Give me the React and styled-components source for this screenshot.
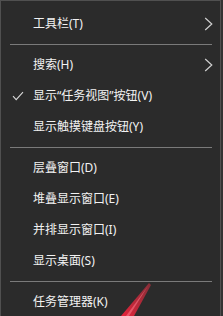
import React from "react";
import styled, { createGlobalStyle } from "styled-components";

const GlobalStyle = createGlobalStyle`
  html, body {
    margin: 0;
    padding: 0;
    background: #333333;
    overflow: hidden;
  }
`;

const items = [
  { label: "工具栏(T)", sub: true },
  { sep: true },
  { label: "搜索(H)", sub: true },
  { label: "显示“任务视图”按钮(V)", checked: true },
  { label: "显示触摸键盘按钮(Y)" },
  { sep: true },
  { label: "层叠窗口(D)" },
  { label: "堆叠显示窗口(E)" },
  { label: "并排显示窗口(I)" },
  { label: "显示桌面(S)" },
  { sep: true },
  { label: "任务管理器(K)" },
];

function CheckIcon() {
  return (
    <svg width="12" height="10" viewBox="0 0 12 10">
      <path d="M1 5.2 L4.2 8.6 L11 1.2" fill="none" stroke="#d8d8d8" strokeWidth="1.1" />
    </svg>
  );
}

function Chevron() {
  return (
    <svg width="9" height="14" viewBox="0 0 9 14">
      <path d="M1.2 1 L7.8 7 L1.2 13" fill="none" stroke="#cfcfcf" strokeWidth="1.2" />
    </svg>
  );
}

function App() {
  return (
    <Stage>
      <GlobalStyle />
      <Menu>
        {items.map((item, i) =>
          item.sep ? (
            <Separator key={i} />
          ) : (
            <Item key={i}>
              <Mark>{item.checked && <CheckIcon />}</Mark>
              <Label>{item.label}</Label>
              <Arrow>{item.sub && <Chevron />}</Arrow>
            </Item>
          )
        )}
      </Menu>
      <Pointer width="223" height="316" viewBox="0 0 223 316">
        <defs>
          <linearGradient id="redfade" x1="0" y1="1" x2="1" y2="0">
            <stop offset="0" stopColor="#e8223a" />
            <stop offset="1" stopColor="#c0303f" stopOpacity="0.6" />
          </linearGradient>
        </defs>
        <polygon points="149,283 151,285 134,316 121,316" fill="url(#redfade)" />
        <polygon points="148,286 129,316 126,316" fill="#ff7a8a" opacity="0.55" />
      </Pointer>
    </Stage>
  );
}

const Stage = styled.div`
  position: relative;
  width: 223px;
  height: 316px;
  overflow: hidden;
`;

const Menu = styled.div`
  width: 219px;
  min-height: 330px;
  box-sizing: content-box;
  padding-top: 7px;
  background: #2b2b2b;
  border: 1px solid #505050;
  border-bottom: none;
  font-family: "Noto Sans", "Noto Sans CJK SC", sans-serif;
  font-size: 12px;
  color: #f2f2f2;
`;

const Item = styled.div`
  display: grid;
  grid-template-columns: 32px 1fr 16px;
  align-items: center;
  height: 31px;
  padding-right: 4px;
`;

const Mark = styled.div`
  display: flex;
  justify-content: center;
  align-items: center;
  padding-left: 1px;
`;

const Label = styled.span`
  white-space: nowrap;
  line-height: 31px;
`;

const Arrow = styled.div`
  display: flex;
  justify-content: center;
  align-items: center;
`;

const Separator = styled.div`
  height: 10px;
  display: flex;
  align-items: center;
  padding: 0 8px 0 9px;

  &::after {
    content: "";
    flex: 1;
    height: 1px;
    background: #7a7a7a;
  }
`;

const Pointer = styled.svg`
  position: absolute;
  left: 0;
  top: 0;
  pointer-events: none;
`;

export default App;
